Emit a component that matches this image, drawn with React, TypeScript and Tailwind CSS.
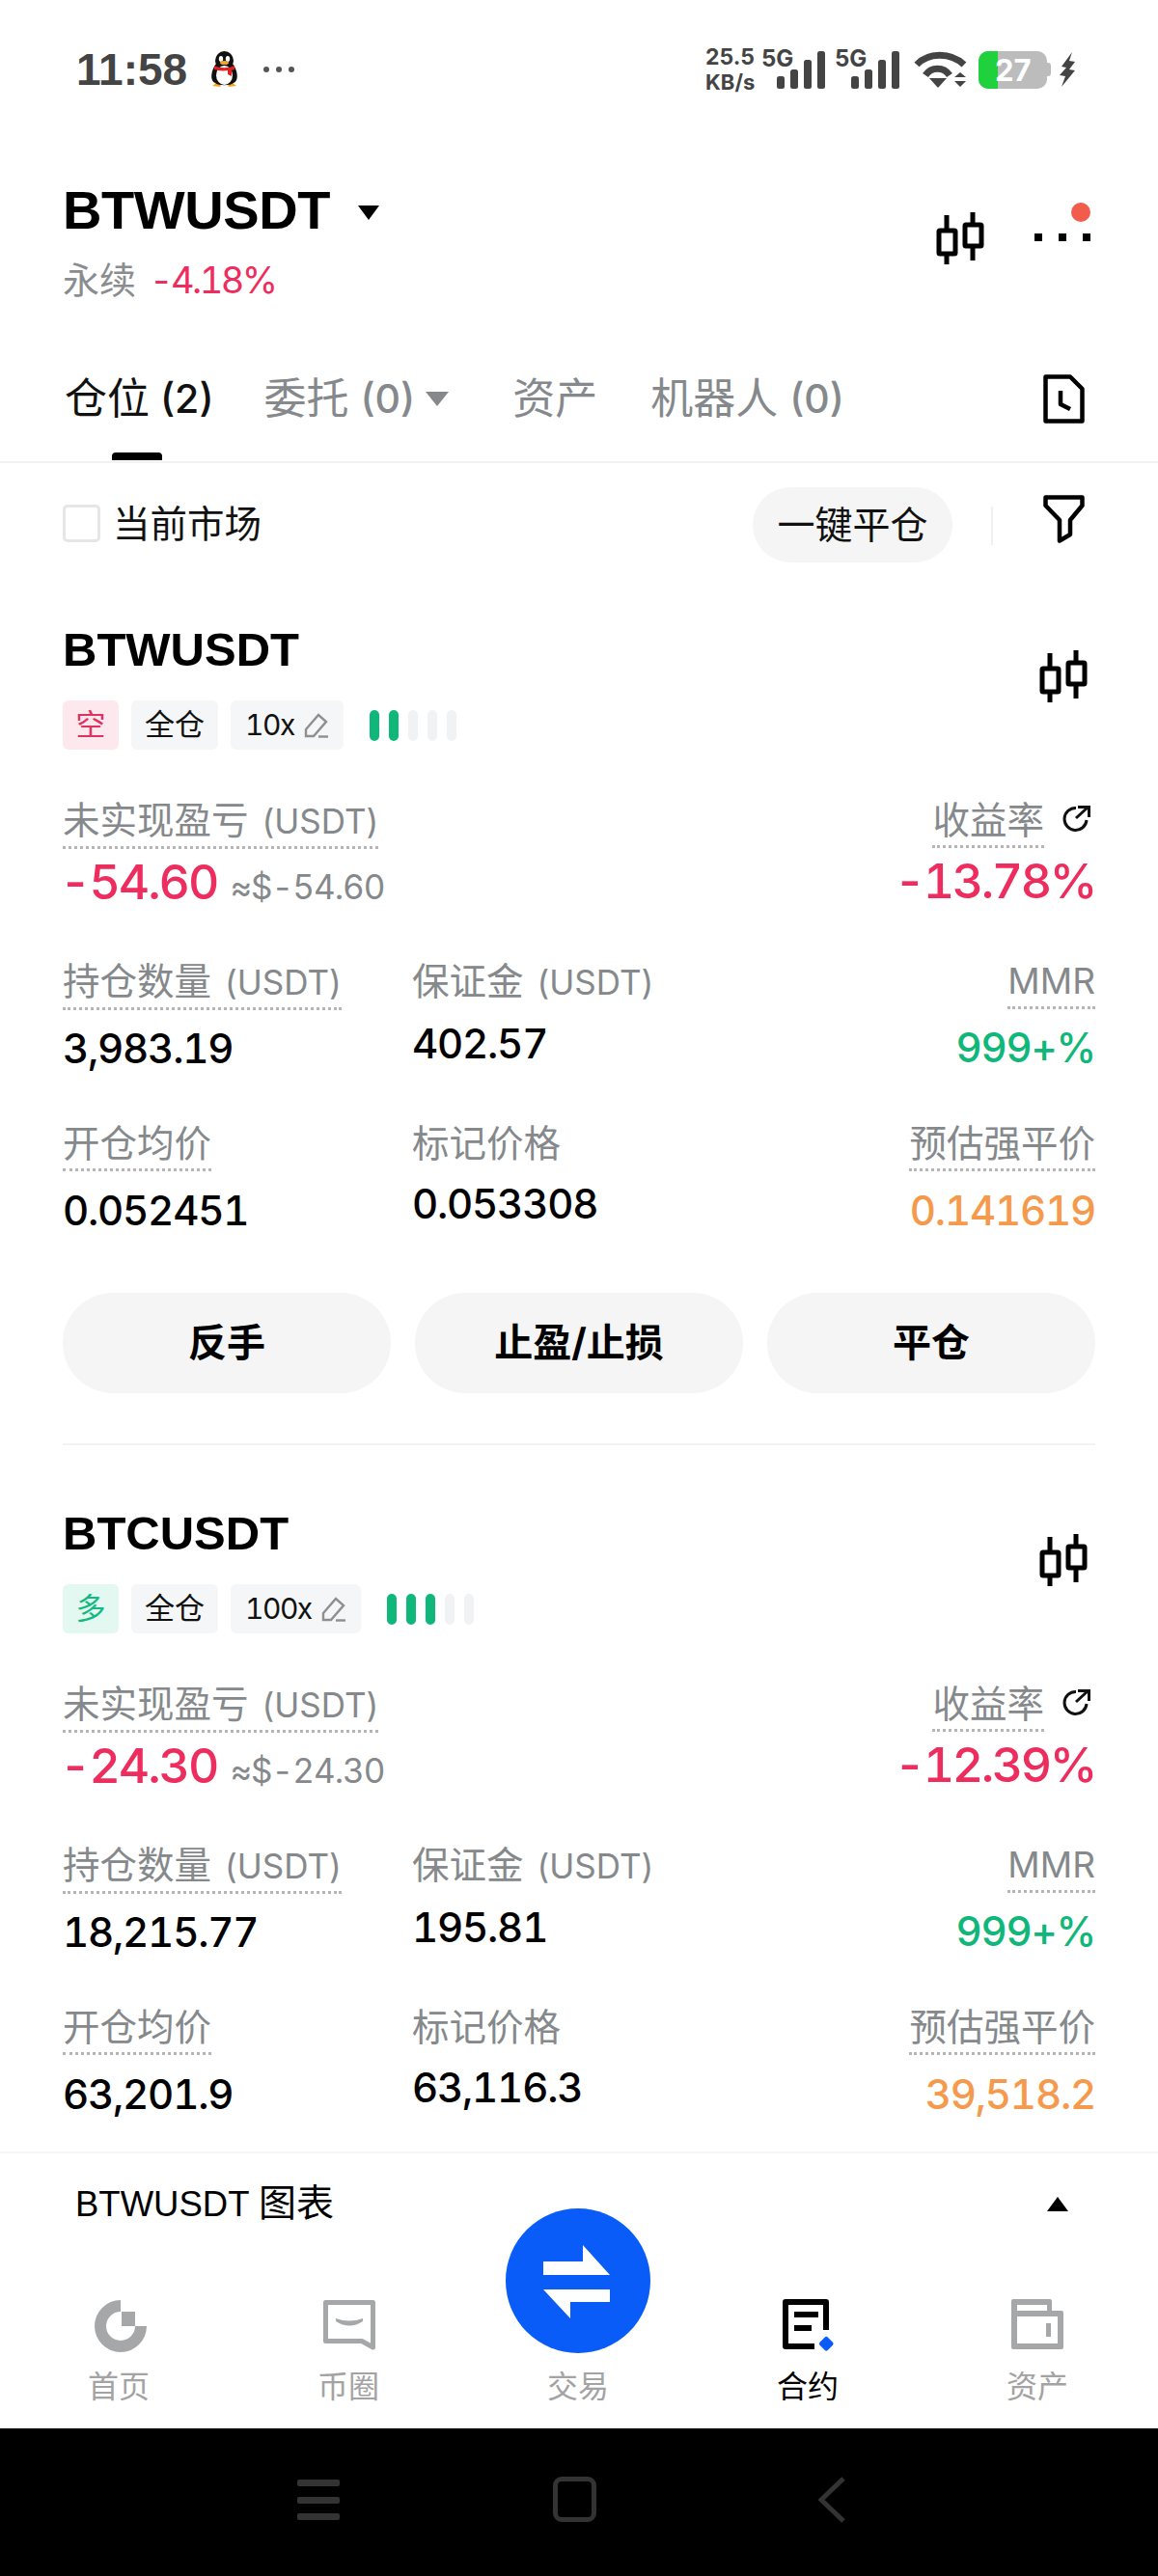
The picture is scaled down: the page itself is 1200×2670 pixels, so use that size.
import React from 'react';

const FONT = 'font-["Inter","Noto_Sans_CJK_SC",sans-serif]';
const TITLE_FONT = 'font-["Liberation_Sans","Noto_Sans_CJK_SC",sans-serif]';

function CandleIcon() {
  return (
    <svg width="50" height="54" viewBox="0 0 50 54" fill="none" stroke="#000" strokeWidth="5">
      <path d="M11 3V19M11 43V54M38 0V13M38 35V50" />
      <rect x="3" y="19" width="17" height="24" rx="1" />
      <rect x="30" y="13" width="17" height="22" rx="1" />
    </svg>
  );
}

function HistoryIcon() {
  return (
    <svg width="43" height="51" viewBox="0 0 43 51" fill="none" stroke="#000" strokeWidth="4.5" strokeLinejoin="round">
      <path d="M2.5 2.5H28L40.5 15V48.5H2.5Z" />
      <path d="M18 17V31L28 36" />
    </svg>
  );
}

function FilterIcon() {
  return (
    <svg width="43" height="50" viewBox="0 0 43 50" fill="none" stroke="#000" strokeWidth="4.5" strokeLinejoin="round">
      <path d="M2.5 2.5H40.5V11L28 26V41L17 47.5V26L2.5 11Z" />
    </svg>
  );
}

function PenIcon() {
  return (
    <svg width="26" height="28" viewBox="0 0 26 28" fill="none" stroke="#8f8f8f" strokeWidth="2.4">
      <path d="M2 18L15 3L23 10L10 25H2Z" />
      <path d="M15 25.5H25" />
    </svg>
  );
}

function ShareIcon() {
  return (
    <svg width="30" height="28" viewBox="0 0 30 28" fill="none" stroke="#111" strokeWidth="3">
      <path d="M14 3.5A11.5 11.5 0 1 0 25 16" />
      <path d="M14 14L26 3" />
      <path d="M16 2.5H27.5V13" />
    </svg>
  );
}

function Penguin() {
  return (
    <svg width="33" height="38" viewBox="0 0 33 38">
      <path d="M4 36L8 33H14L12 37Z M29 36L25 33H19L21 37Z" fill="#f5a623" />
      <ellipse cx="16.5" cy="10" rx="9.5" ry="10" fill="#111" />
      <path d="M7 14C1 24 3 32 7 33C10 36 23 36 26 33C30 32 32 24 26 14Z" fill="#111" />
      <ellipse cx="16.5" cy="25" rx="8.5" ry="10" fill="#fff" />
      <ellipse cx="13" cy="8" rx="2.2" ry="3" fill="#fff" />
      <ellipse cx="20" cy="8" rx="2.2" ry="3" fill="#fff" />
      <ellipse cx="16.5" cy="12" rx="4.5" ry="2" fill="#f5a623" />
      <path d="M6 15C12 18 21 18 27 15V19L24 20V26L20 24V20C14 21 10 20 6 19Z" fill="#e02020" />
    </svg>
  );
}

function SignalBars() {
  return (
    <svg width="50" height="39" viewBox="0 0 50 39" fill="#444">
      <rect x="0" y="26" width="8" height="13" rx="2.5" />
      <rect x="14" y="19" width="8" height="20" rx="2.5" />
      <rect x="28" y="9" width="8" height="30" rx="2.5" />
      <rect x="42" y="0" width="8" height="39" rx="2.5" />
    </svg>
  );
}

function StatusRight() {
  return (
    <div className="flex items-center">
      <div className="flex flex-col w-[60px] text-[#444] font-bold">
        <span className="text-[23px] leading-[26px]">25.5</span>
        <span className="text-[22px] leading-[26px]">KB/s</span>
      </div>
      <div className="relative w-[65px] h-[40px] ml-[-1px] flex items-end justify-end">
        <span className="absolute left-[-1px] top-[-4px] text-[24px] leading-[26px] font-bold text-[#444]">5G</span>
        <SignalBars />
      </div>
      <div className="relative w-[77px] h-[40px] flex items-end justify-end">
        <span className="absolute left-[10px] top-[-4px] text-[24px] leading-[26px] font-bold text-[#444]">5G</span>
        <SignalBars />
      </div>
      <svg className="ml-[15px]" width="55" height="38" viewBox="0 0 55 38" fill="none" stroke="#444" strokeWidth="7">
        <path d="M3 14C15 1 38 1 52 14" />
        <path d="M12 25C18 16 31 16 37 25" />
        <path d="M16 28H34L25 38Z" fill="#444" strokeWidth="0" />
        <path d="M42 27L48 22L54 27ZM42 31L48 37L54 31Z" fill="#444" strokeWidth="0" />
      </svg>
      <div className="relative ml-[12px] w-[71px] h-[39px] rounded-[10px] bg-[#bcbcbc] overflow-hidden">
        <div className="absolute left-0 top-0 bottom-0 w-[20px] bg-[#1fd13c]" />
        <span className="absolute left-[17px] top-[4px] text-[31px] leading-[31px] font-bold text-white">27</span>
      </div>
      <div className="w-[4px] h-[14px] bg-[#bcbcbc] rounded-r-[3px]" />
      <svg className="ml-[8px]" width="18" height="36" viewBox="0 0 18 36" fill="#444">
        <path d="M14 0L3 15L8 16L1 24L7 25L3 36L17 19L11 18L17 10L11 9Z" />
      </svg>
    </div>
  );
}

function StatusBar() {
  return (
    <div className="h-[144px] shrink-0 pl-[79px] pr-[85px] flex items-center justify-between">
      <div className="flex items-center">
        <span className={`${TITLE_FONT} text-[46px] leading-[56px] font-bold text-[#444] w-[137px]`}>11:58</span>
        <Penguin />
        <div className="ml-[24px] flex gap-[7px]">
          <div className="w-[6px] h-[6px] rounded-full bg-[#555]" />
          <div className="w-[6px] h-[6px] rounded-full bg-[#555]" />
          <div className="w-[6px] h-[6px] rounded-full bg-[#555]" />
        </div>
      </div>
      <StatusRight />
    </div>
  );
}

function Header() {
  return (
    <div className="h-[186px] shrink-0 pl-[65px] pr-[70px] pt-[41px] flex justify-between">
      <div>
        <div className="flex items-center h-[66px]">
          <span className={`${TITLE_FONT} text-[56px] leading-[66px] font-bold text-black tracking-[-0.4px]`}>BTWUSDT</span>
          <div className="ml-[29px] mt-[4px] w-0 h-0 border-l-[11px] border-r-[11px] border-t-[15px] border-l-transparent border-r-transparent border-t-black" />
        </div>
        <div className="flex items-center h-[50px] mt-[14px] text-[38px] leading-[50px]">
          <span className="text-[#8a8d8f]">永续</span>
          <span className="ml-[14px] text-[#ee2d5f] text-[38px] tabular-nums tracking-[-2.6px]">-4.18%</span>
        </div>
      </div>
      <div className="flex items-start pt-[35px]">
        <CandleIcon />
        <div className="relative ml-[52px] w-[58px] h-[54px]">
          <div className="absolute right-0 top-[-10px] w-[20px] h-[20px] rounded-full bg-[#f25c4d]" />
          <div className="absolute left-0 right-0 top-[22px] flex justify-between">
            <div className="w-[8px] h-[8px] bg-black" />
            <div className="w-[8px] h-[8px] bg-black" />
            <div className="w-[8px] h-[8px] bg-black" />
          </div>
        </div>
      </div>
    </div>
  );
}

function Tabs() {
  return (
    <div className="h-[150px] shrink-0 border-b-2 border-[#f3f3f3] pl-[67px] pr-[76px] pt-[18px] flex justify-between items-center">
      <div className="flex items-center text-[44px] leading-[56px] text-[#85898c]">
        <div className="relative flex items-center text-[#111]">
          <span>仓位</span>
          <span className="ml-[11px] font-medium text-[41px]">(2)</span>
          <div className="absolute left-[49px] top-[84px] w-[52px] h-[8px] rounded-t-[4px] bg-black" />
        </div>
        <span className="ml-[52px]">委托</span>
        <span className="ml-[12px] text-[41px] font-medium">(0)</span>
        <div className="ml-[11px] w-0 h-0 border-l-[12px] border-r-[12px] border-t-[15px] border-l-transparent border-r-transparent border-t-[#85898c]" />
        <span className="ml-[66px]">资产</span>
        <span className="ml-[55px]">机器人</span>
        <span className="ml-[12px] text-[41px] font-medium">(0)</span>
      </div>
      <HistoryIcon />
    </div>
  );
}

function FilterRow() {
  return (
    <div className="h-[102px] shrink-0 pl-[65px] pr-[76px] pt-[25px] flex items-start">
      <div className="mt-[18px] w-[39px] h-[39px] rounded-[5px] border-[3px] border-[#e6e6e6]" />
      <span className="ml-[13px] mt-[13px] text-[38.5px] leading-[50px] text-[#111]">当前市场</span>
      <div className="ml-auto w-[207px] h-[78px] rounded-full bg-[#f5f5f5] flex items-center justify-center text-[39px] text-[#111]">一键平仓</div>
      <div className="ml-[40px] mt-[20px] w-[2px] h-[40px] bg-[#f0f0f0]" />
      <div className="ml-[52px] mt-[8px]">
        <FilterIcon />
      </div>
    </div>
  );
}

type CardProps = {
  symbol: string;
  side: string;
  long: boolean;
  lev: string;
  filled: number;
  pnl: string;
  usd: string;
  rate: string;
  qty: string;
  margin: string;
  open: string;
  mark: string;
  liq: string;
  showActions: boolean;
};

function DottedLabel({ text, unit }: { text: string; unit?: string }) {
  return (
    <div className="flex">
      <span className="text-[38.5px] leading-[46px] text-[#85898c] pb-[3px] border-b-[3px] border-dotted border-[#b5b5b5] whitespace-nowrap">
        {text}
        {unit && <span className="ml-[14px] text-[35px]">{unit}</span>}
      </span>
    </div>
  );
}

function PlainLabel({ text, unit }: { text: string; unit?: string }) {
  return (
    <div className="text-[38.5px] leading-[46px] text-[#85898c] whitespace-nowrap">
      {text}
      {unit && <span className="ml-[14px] text-[35px]">{unit}</span>}
    </div>
  );
}

function PositionCard(p: CardProps) {
  return (
    <div className="px-[65px] pt-[61px] shrink-0">
      <div className="flex justify-between items-start h-[60px]">
        <span className={`${TITLE_FONT} text-[49px] leading-[60px] font-bold text-black`}>{p.symbol}</span>
        <div className="mt-[31px] mr-[8px]">
          <CandleIcon />
        </div>
      </div>
      <div className="mt-[23px] flex items-center h-[51px]">
        <div className={p.long ? 'w-[58px] h-[51px] rounded-[6px] bg-[#e3f8f0] text-[#12b981] text-[31px] flex items-center justify-center' : 'w-[58px] h-[51px] rounded-[6px] bg-[#fde8ee] text-[#e0325f] text-[31px] flex items-center justify-center'}>{p.side}</div>
        <div className="ml-[13px] w-[90px] h-[51px] rounded-[6px] bg-[#f4f6f7] text-[#111] text-[31px] flex items-center justify-center">全仓</div>
        <div className="ml-[13px] h-[51px] px-[15px] rounded-[6px] bg-[#f4f6f7] text-[#111] text-[30px] tabular-nums tracking-[-1.5px] flex items-center gap-[10px]">
          <span>{p.lev}</span>
          <PenIcon />
        </div>
        <div className="ml-[27px] flex gap-[10px]">
          {[0, 1, 2, 3, 4].map((i) => (
            <div key={i} className={i < p.filled ? 'w-[10px] h-[32px] rounded-full bg-[#10b77a]' : 'w-[10px] h-[32px] rounded-full bg-[#f1f2f3]'} />
          ))}
        </div>
      </div>

      <div className="mt-[50px] flex justify-between">
        <div>
          <DottedLabel text="未实现盈亏" unit="(USDT)" />
          <div className="mt-[6px] ml-[-3px] flex items-baseline h-[56px]">
            <span className="text-[50px] leading-[56px] font-medium tabular-nums tracking-[-2px] text-[#ee2d5f]">{p.pnl}</span>
            <span className="ml-[13px] text-[35px] tabular-nums tracking-[-1px] text-[#85898c]">{p.usd}</span>
          </div>
        </div>
        <div className="flex flex-col items-end">
          <div className="flex items-start">
            <DottedLabel text="收益率" />
            <div className="ml-[19px] mt-[7px] mr-[4px]">
              <ShareIcon />
            </div>
          </div>
          <div className="mt-[6px] text-[50px] leading-[56px] font-medium tabular-nums tracking-[-2.4px] text-[#ee2d5f]">{p.rate}</div>
        </div>
      </div>

      <div className="mt-[52px] grid grid-cols-[362px_1fr_auto]">
        <div>
          <DottedLabel text="持仓数量" unit="(USDT)" />
          <div className="mt-[14px] text-[42px] leading-[52px] font-medium tabular-nums tracking-[-1.2px] text-black">{p.qty}</div>
        </div>
        <div>
          <PlainLabel text="保证金" unit="(USDT)" />
          <div className="mt-[15px] text-[42px] leading-[52px] font-medium tabular-nums tracking-[-1.2px] text-black">{p.margin}</div>
        </div>
        <div className="flex flex-col items-end">
          <div className="flex">
            <span className="text-[37px] leading-[46px] text-[#85898c] pb-[3px] border-b-[3px] border-dotted border-[#b5b5b5]">MMR</span>
          </div>
          <div className="mt-[14px] text-[42px] leading-[52px] font-medium tabular-nums tracking-[-1.2px] text-[#10b77a]">999+%</div>
        </div>
      </div>

      <div className="mt-[49px] grid grid-cols-[362px_1fr_auto]">
        <div>
          <DottedLabel text="开仓均价" />
          <div className="mt-[15px] text-[42px] leading-[52px] font-medium tabular-nums tracking-[-1.2px] text-black">{p.open}</div>
        </div>
        <div>
          <PlainLabel text="标记价格" />
          <div className="mt-[14px] text-[42px] leading-[52px] font-medium tabular-nums tracking-[-1.2px] text-black">{p.mark}</div>
        </div>
        <div className="flex flex-col items-end">
          <DottedLabel text="预估强平价" />
          <div className="mt-[15px] text-[42px] leading-[52px] font-medium tabular-nums tracking-[-1.2px] text-[#f59a4c]">{p.liq}</div>
        </div>
      </div>

      {p.showActions && (
        <>
          <div className="mt-[59px] grid grid-cols-3 gap-[25px] text-[40px] font-bold text-black">
            <div className="h-[104px] rounded-full bg-[#f5f5f5] flex items-center justify-center">反手</div>
            <div className="h-[104px] rounded-full bg-[#f5f5f5] flex items-center justify-center">止盈/止损</div>
            <div className="h-[104px] rounded-full bg-[#f5f5f5] flex items-center justify-center">平仓</div>
          </div>
          <div className="mt-[52px] h-[2px] bg-[#f2f2f2]" />
        </>
      )}
    </div>
  );
}

function ChartBar() {
  return (
    <div className="h-[108px] shrink-0 border-t-2 border-[#f5f5f5] pl-[78px] pr-[93px] pt-[29px] flex justify-between items-start">
      <span className={`${TITLE_FONT} text-[36.5px] leading-[46px] text-black`}>
        BTWUSDT <span className="text-[39px]">图表</span>
      </span>
      <div className="mt-[16px] w-0 h-0 border-l-[11px] border-r-[11px] border-b-[15px] border-l-transparent border-r-transparent border-b-black" />
    </div>
  );
}

function NavItem({ label, icon, active }: { label: string; icon: React.ReactNode; active?: boolean }) {
  return (
    <div className="w-[238px] flex flex-col items-center">
      <div className="h-[56px] flex items-start">{icon}</div>
      <span className={active ? 'mt-[13px] text-[32px] leading-[44px] text-black' : 'mt-[13px] text-[32px] leading-[44px] text-[#a3a3a3]'}>{label}</span>
    </div>
  );
}

function BottomNav() {
  return (
    <div className="relative h-[179px] shrink-0 bg-white flex items-start justify-center pt-[45px] pr-[2px]">
      <div className="absolute left-[524px] top-[-49px] w-[150px] h-[150px] rounded-full bg-[#0a5cf8] flex items-center justify-center">
        <svg width="150" height="150" viewBox="0 0 150 150" fill="#fff">
          <path d="M39 55H80V38L108 69H39Z" />
          <path d="M39 84H108V97H67V114Z" />
        </svg>
      </div>
      <NavItem
        label="首页"
        icon={
          <svg className="ml-[3px]" width="56" height="56" viewBox="0 0 56 56" fill="#a5a7a9">
            <path d="M28 1A27 27 0 1 0 55 28H43A15 15 0 1 1 28 13Z" />
            <rect x="29" y="13" width="14" height="15" />
          </svg>
        }
      />
      <NavItem
        label="币圈"
        icon={
          <svg className="ml-[2px] mt-[1px]" width="54" height="52" viewBox="0 0 54 52" fill="none" stroke="#a5a7a9" strokeWidth="5" strokeLinejoin="round">
            <path d="M2.5 2.5H51.5V49L40 42.5H2.5Z" />
            <path d="M13 19Q27 24 41 19V22Q27 31 13 22Z" fill="#a5a7a9" strokeWidth="0" />
          </svg>
        }
      />
      <NavItem label="交易" icon={<div className="w-[56px] h-[56px]" />} />
      <NavItem
        label="合约"
        active
        icon={
          <svg className="ml-[2px]" width="54" height="55" viewBox="0 0 54 55" fill="none">
            <path d="M45 32V3H3V49H33" stroke="#000" strokeWidth="6" strokeLinejoin="round" />
            <rect x="12" y="13" width="25" height="6" fill="#000" />
            <rect x="12" y="27" width="18" height="6" fill="#000" />
            <rect x="39.5" y="40.5" width="11.5" height="11.5" rx="2" transform="rotate(45 45.25 46.25)" fill="#0a5cf8" />
          </svg>
        }
      />
      <NavItem
        label="资产"
        icon={
          <svg className="mr-[1px]" width="54" height="52" viewBox="0 0 54 52" fill="#a5a7a9">
            <path d="M2 0H40Q42 0 42 2V12H52Q54 12 54 14V50Q54 52 52 52H2Q0 52 0 50V2Q0 0 2 0Z" />
            <rect x="6" y="6" width="31" height="6" fill="#fff" />
            <rect x="6" y="18" width="42" height="28" fill="#fff" />
            <rect x="36" y="25" width="5" height="14" />
          </svg>
        }
      />
    </div>
  );
}

function SystemNav() {
  return (
    <div className="h-[153px] shrink-0 bg-black flex items-start pt-[53px] pl-[308px]">
      <div className="w-[44px] h-[42px] flex flex-col justify-between">
        <div className="h-[7px] rounded-[2px] bg-[#333]" />
        <div className="h-[7px] rounded-[2px] bg-[#333]" />
        <div className="h-[7px] rounded-[2px] bg-[#333]" />
      </div>
      <div className="ml-[221px] mt-[-3px] w-[45px] h-[47px] rounded-[9px] border-[5px] border-[#333]" />
      <svg className="ml-[230px] mt-[-3px]" width="28" height="48" viewBox="0 0 28 48" fill="none" stroke="#333" strokeWidth="5">
        <path d="M26 2L3 24L26 46" />
      </svg>
    </div>
  );
}

export default function App() {
  return (
    <div className={`${FONT} w-[1200px] h-[2670px] bg-white flex flex-col overflow-hidden`}>
      <StatusBar />
      <Header />
      <Tabs />
      <FilterRow />
      <div className="flex-1 min-h-0 overflow-hidden flex flex-col">
        <PositionCard symbol="BTWUSDT" side="空" long={false} lev="10x" filled={2} pnl="-54.60" usd="≈$-54.60" rate="-13.78%" qty="3,983.19" margin="402.57" open="0.052451" mark="0.053308" liq="0.141619" showActions />
        <PositionCard symbol="BTCUSDT" side="多" long lev="100x" filled={3} pnl="-24.30" usd="≈$-24.30" rate="-12.39%" qty="18,215.77" margin="195.81" open="63,201.9" mark="63,116.3" liq="39,518.2" showActions={false} />
      </div>
      <ChartBar />
      <BottomNav />
      <SystemNav />
    </div>
  );
}
